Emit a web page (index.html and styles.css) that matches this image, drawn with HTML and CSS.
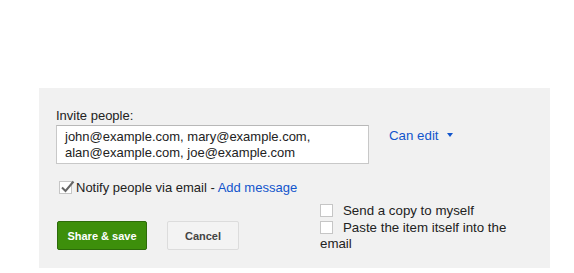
FILE: index.html
```html
<!DOCTYPE html>
<html lang="en">
<head>
    <meta charset="UTF-8">
    <title>Share settings</title>
    <link rel="stylesheet" href="styles.css">
</head>
<body>
    <div class="share-panel">
        <div class="invite-label">Invite people:</div>

        <div class="invite-row">
            <div class="invite-box">john@example.com, mary@example.com,<br>alan@example.com, joe@example.com</div>
            <a class="role-menu">Can edit <span class="caret"></span></a>
        </div>

        <div class="notify-row">
            <span class="check checked"><svg width="16" height="14" viewBox="0 0 16 14"><path d="M2 7.5 L5.5 11 L13.5 1.5" fill="none" stroke="#666" stroke-width="2"/></svg></span>Notify people via email - <a class="link">Add message</a>
        </div>

        <div class="bottom-row">
            <div class="buttons">
                <button class="btn btn-save">Share &amp; save</button>
                <button class="btn btn-cancel">Cancel</button>
            </div>
            <div class="options">
                <div class="option"><span class="check"></span>Send a copy to myself</div>
                <div class="option"><span class="check"></span>Paste the item itself into the email</div>
            </div>
        </div>
    </div>
</body>
</html>
```

FILE: styles.css
```css
body {
    margin: 0;
    background-color: #ffffff;
    font-family: "Liberation Sans", Arial, sans-serif;
    font-size: 13px;
    color: #222;
}

.share-panel {
    margin: 88px 0 0 39px;
    width: 494px;
    height: 160px;
    padding: 20px 0 0 17px;
    background-color: #f1f1f1;
}

.invite-label {
    line-height: 15px;
}

.invite-row {
    display: flex;
    align-items: flex-start;
    margin-top: 2px;
}

.invite-box {
    width: 303px;
    height: 33px;
    padding: 3px 0 1px 8px;
    background-color: #fff;
    border: 1px solid #c8c8c8;
    border-top-color: #b8b8b8;
    line-height: 16px;
}

.role-menu {
    margin: 3px 0 0 20px;
    color: #15c;
    line-height: 15px;
    font-size: 13.3px;
}

.caret {
    display: inline-block;
    margin-left: 5px;
    vertical-align: 3px;
    border-left: 3px solid transparent;
    border-right: 3px solid transparent;
    border-top: 4px solid #15c;
}

.link {
    color: #15c;
}

.notify-row {
    margin: 16px 0 0 3px;
    line-height: 16px;
}

.check {
    position: relative;
    display: inline-block;
    width: 11px;
    height: 11px;
    background-color: #fff;
    border: 1px solid #c6c6c6;
    margin-right: 10px;
    vertical-align: -2px;
}

.check.checked {
    margin-right: 4px;
}

.check svg {
    position: absolute;
    left: 0;
    top: -2px;
}

.bottom-row {
    display: flex;
    align-items: flex-start;
    margin-top: 7px;
}

.buttons {
    display: flex;
    gap: 20px;
    margin: 18px 0 0 1px;
}

.btn {
    height: 29px;
    border-radius: 2px;
    font-family: "Liberation Sans", Arial, sans-serif;
    font-size: 11px;
    font-weight: bold;
    padding: 0;
}

.btn-save {
    width: 90px;
    color: #fff;
    background-color: #3d8f0b;
    border: 1px solid #2d6b0a;
}

.btn-cancel {
    width: 72px;
    color: #444;
    background-color: #f3f3f3;
    border: 1px solid #dcdcdc;
}

.options {
    width: 200px;
    margin-left: 81px;
    line-height: 16px;
    font-size: 13.3px;
}

.option {
    margin-bottom: 1px;
}
```
